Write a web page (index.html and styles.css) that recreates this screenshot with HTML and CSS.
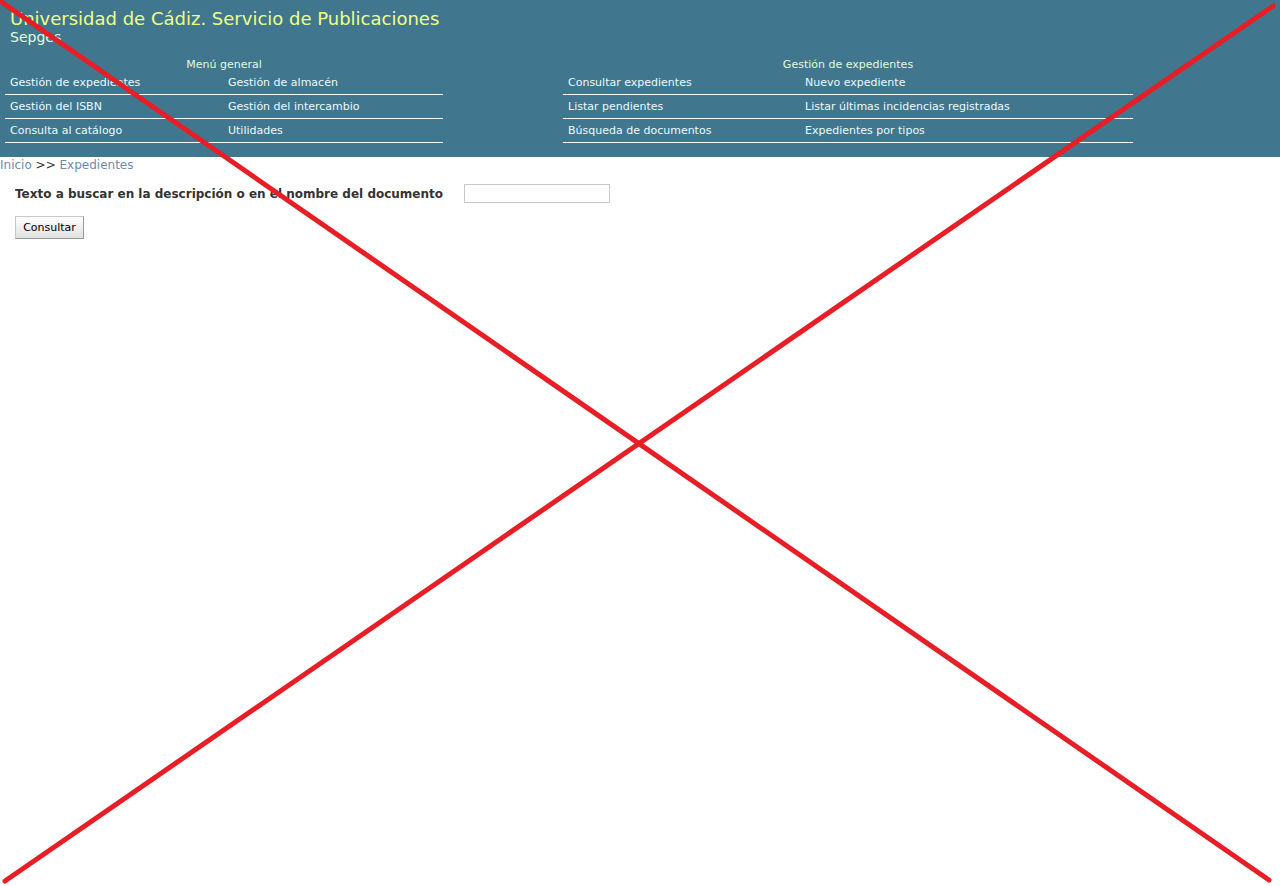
FILE: index.html
```html
<!DOCTYPE html>
<html lang="es">
<head>
<meta charset="utf-8">
<title>Sepges - Búsqueda de documentos</title>
<link rel="stylesheet" href="styles.css">
</head>
<body>
<header class="header">
  <h1 class="title">Universidad de Cádiz. Servicio de Publicaciones</h1>
  <p class="subtitle">Sepges</p>
  <div class="menus">
    <nav class="menu menu-general" aria-labelledby="menu-general">
      <h2 class="menu-title" id="menu-general">Menú general</h2>
      <ul class="menu-list">
        <li><a href="#">Gestión de expedientes</a></li>
        <li><a href="#">Gestión de almacén</a></li>
        <li><a href="#">Gestión del ISBN</a></li>
        <li><a href="#">Gestión del intercambio</a></li>
        <li><a href="#">Consulta al catálogo</a></li>
        <li><a href="#">Utilidades</a></li>
      </ul>
    </nav>
    <nav class="menu menu-files" aria-labelledby="menu-files">
      <h2 class="menu-title" id="menu-files">Gestión de expedientes</h2>
      <ul class="menu-list">
        <li><a href="#">Consultar expedientes</a></li>
        <li><a href="#">Nuevo expediente</a></li>
        <li><a href="#">Listar pendientes</a></li>
        <li><a href="#">Listar últimas incidencias registradas</a></li>
        <li><a href="#">Búsqueda de documentos</a></li>
        <li><a href="#">Expedientes por tipos</a></li>
      </ul>
    </nav>
  </div>
</header>
<nav class="breadcrumb" aria-label="Ruta"><a href="#">Inicio</a> &gt;&gt; <a href="#">Expedientes</a></nav>
<main>
  <form class="search">
    <div class="field">
      <label for="texto">Texto a buscar en la descripción o en el nombre del documento</label>
      <input class="text-input" id="texto" type="text">
    </div>
    <button class="submit" type="button">Consultar</button>
  </form>
</main>
<svg class="cross" viewBox="0 0 1280 886" preserveAspectRatio="none" aria-hidden="true">
  <path d="M0 1L1269 880M1273 6L5 881"/>
</svg>
</body>
</html>
```
FILE: styles.css
```css
* {
  box-sizing: border-box;
}

body {
  margin: 0;
  min-height: 100vh;
  background: #fff;
  color: #333;
  font: 12px/16px "DejaVu Sans", sans-serif;
}

a {
  text-decoration: none;
}

.header {
  padding: 8px 0 14px;
  background: #41768f;
  color: #e8fbff;
}

.title,
.subtitle {
  margin: 0;
  padding: 0 10px;
  font-weight: normal;
}

.title {
  color: #f0ff86;
  font-size: 18px;
  line-height: 21px;
}

.subtitle {
  color: #e2fbd8;
  font-size: 14px;
  line-height: 17px;
}

.menus {
  display: grid;
  grid-template-columns: 438fr 570fr 27fr;
  column-gap: 120px;
  padding: 13px 0 0 5px;
}

.menu {
  font-size: 11px;
}

.menu-title {
  margin: 0;
  color: #e2fbd8;
  font-size: 11px;
  font-weight: normal;
  line-height: 12px;
  text-align: center;
}

.menu-list {
  display: grid;
  margin: 0;
  padding: 0;
  list-style: none;
}

.menu-general .menu-list {
  grid-template-columns: 218fr 220fr;
}

.menu-files .menu-list {
  grid-template-columns: 237fr 333fr;
}

.menu-list li {
  height: 24px;
  padding: 5px 5px 0;
  border-bottom: 1px solid #f4fcff;
  line-height: 14px;
  white-space: nowrap;
}

.menu-list a {
  color: #e8fbff;
}

.breadcrumb {
  color: #333;
  line-height: 16px;
}

.breadcrumb a {
  color: #6f8ab0;
}

.search {
  padding: 11px 15px;
}

.field {
  display: flex;
  align-items: center;
  gap: 5px;
  font-weight: bold;
}

.field label {
  min-width: 444px;
}

.text-input {
  width: 146px;
  height: 19px;
  padding: 0 2px;
  border: 1px solid #c8c8c8;
  background: #fff;
  font: 11px "DejaVu Sans", sans-serif;
}

.submit {
  display: block;
  min-width: 69px;
  height: 23px;
  margin-top: 13px;
  padding: 0 6px;
  border: 1px solid;
  border-color: #c8c8c8 #999 #999 #c8c8c8;
  background: linear-gradient(#fff, #e0e0e0);
  color: #000;
  font: 11px "DejaVu Sans", sans-serif;
}

.cross {
  position: absolute;
  top: 0;
  left: 0;
  width: 100%;
  height: 100%;
  pointer-events: none;
}

.cross path {
  fill: none;
  stroke: #e81e26;
  stroke-width: 5;
  stroke-linecap: round;
}
```
